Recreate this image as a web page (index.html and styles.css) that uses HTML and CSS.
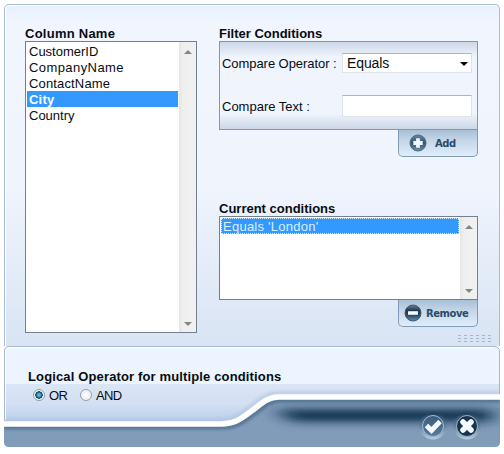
FILE: index.html
```html
<!DOCTYPE html>
<html lang="en">
<head>
<meta charset="utf-8">
<title>Filter</title>
<link rel="stylesheet" href="styles.css">
</head>
<body>
<main class="dialog">
  <section class="panel">
    <div class="columns">
      <h2><span class="t-column">Column Name</span></h2>
      <div class="listbox tall">
        <ul>
          <li>CustomerID</li>
          <li class="company">CompanyName</li>
          <li class="contact">ContactName</li>
          <li class="selected bold">City</li>
          <li>Country</li>
        </ul>
        <div class="scrollbar"><i class="up"></i><i class="down"></i></div>
      </div>
    </div>
    <div class="conditions">
      <h2>Filter Conditions</h2>
      <div class="filter">
        <div class="row"><label class="l-op">Compare Operator :</label><div class="select"><span>Equals</span><i></i></div></div>
        <div class="row second"><label>Compare Text :</label><div class="input"></div></div>
      </div>
      <div class="tab add">
        <svg width="18" height="18" viewBox="0 0 18 18"><defs><linearGradient id="ball" x2="0" y2="1"><stop stop-color="#68839e"/><stop offset=".5" stop-color="#34536f"/><stop offset="1" stop-color="#6e90ac"/></linearGradient></defs><circle cx="9" cy="9" r="8" fill="url(#ball)" stroke="#4f6b85"/><path d="M9 4.300v9.400M4.300 9h9.400" stroke="#edf6ff" stroke-width="3.800"/></svg>
        <span>Add</span>
      </div>
      <h2 class="current">Current conditions</h2>
      <div class="listbox short">
        <ul><li class="selected focus"><span>Equals 'London'</span></li></ul>
        <div class="scrollbar"><i class="up"></i><i class="down"></i></div>
      </div>
      <div class="tab remove">
        <svg width="18" height="18" viewBox="0 0 18 18"><defs><linearGradient id="ball2" x2="0" y2="1"><stop stop-color="#6b8298"/><stop offset=".35" stop-color="#20364d"/><stop offset=".6" stop-color="#27425b"/><stop offset="1" stop-color="#5f91b3"/></linearGradient></defs><circle cx="9" cy="9" r="8" fill="url(#ball2)" stroke="#3f5b74"/><path d="M4 9h10" stroke="#f4faff" stroke-width="3.600"/></svg>
        <span>Remove</span>
      </div>
    </div>
    <div class="grip"></div>
  </section>
  <section class="footer">
    <svg class="wave" width="496" height="101" viewBox="4 346 496 101">
      <defs>
        <linearGradient id="band" gradientUnits="userSpaceOnUse" x1="0" y1="384" x2="0" y2="421"><stop stop-color="#dae5f5"/><stop offset=".55" stop-color="#d3dff2"/><stop offset="1" stop-color="#bccfec"/></linearGradient>
        <filter id="soft" filterUnits="userSpaceOnUse" x="200" y="370" width="320" height="90"><feGaussianBlur stdDeviation="10 5"/></filter>
        <filter id="edge" x="-10%" y="-100%" width="120%" height="300%"><feGaussianBlur stdDeviation="1.500"/></filter>
        <clipPath id="frame"><path d="M9 346H494Q500 346 500 352V442Q500 447 495 447H9Q4 447 4 442V351Q4 346 9 346Z"/></clipPath>
        <clipPath id="bar"><path d="M4 425H222C236 425 243 418 253 411C262 404 268 398 279 398H500V447H4Z"/></clipPath>
      </defs>
      <g clip-path="url(#frame)">
        <rect x="4" y="346" width="496" height="101" fill="#ecf4ff"/>
        <rect x="4" y="384" width="496" height="42" fill="url(#band)"/>
        <path d="M4 420H222C234 420 241 413 251 406C260 399 266 393 279 393H500" fill="none" stroke="#aac0dd" stroke-width="4" opacity=".55" filter="url(#edge)"/>
        <g clip-path="url(#bar)">
          <rect x="4" y="390" width="496" height="57" fill="#809cb9"/>
          <path d="M4 427H222C238 427 245 420 255 413C264 406 270 400 281 400H500" fill="none" stroke="#557694" stroke-width="5" filter="url(#edge)"/>
          <path d="M277 410H492V421H300Q285 421 277 410Z" fill="#052440" filter="url(#soft)"/>
        </g>
        <path d="M4 424H222C236 424 243 417 253 410C262 403 268 397 279 397H500" fill="none" stroke="#fff" stroke-width="5.500"/>
      </g>
      <path d="M4.500 421V351Q4.500 346.500 9 346.500H494Q499.500 346.500 499.500 352V394" fill="none" stroke="#a9bacb"/>
      <path d="M5.500 420V352Q5.500 347.500 10 347.500H493" fill="none" stroke="#fff" opacity=".8"/>
    </svg>
    <div class="operator">
      <h2>Logical Operator for multiple conditions</h2>
      <div class="choices">
        <span class="radio on"></span><span class="or">OR</span>
        <span class="radio"></span><span class="and">AND</span>
      </div>
    </div>
    <div class="actions">
      <svg width="28" height="28" viewBox="0 0 28 28"><defs><linearGradient id="rim" x2="0" y2="1"><stop stop-color="#1e3b56"/><stop offset=".45" stop-color="#587895"/><stop offset="1" stop-color="#b8cde0"/></linearGradient><linearGradient id="face" x2="0" y2="1"><stop stop-color="#3b5b79"/><stop offset="1" stop-color="#587c9e"/></linearGradient></defs><circle cx="14" cy="14" r="13.500" fill="url(#rim)"/><circle cx="14" cy="14" r="10.500" fill="url(#face)" stroke="#a3bbcf"/><path d="M7.500 13.500L12.500 18.500L21 9.500" fill="none" stroke="#f4faff" stroke-width="4.800"/></svg>
      <svg width="28" height="28" viewBox="0 0 28 28"><circle cx="14" cy="14" r="13.500" fill="url(#rim)"/><circle cx="14" cy="14" r="10.500" fill="#19334c" stroke="#9ab3c9"/><path d="M10 10L18 18M18 10L10 18" stroke="#f4faff" stroke-width="5.500" stroke-linecap="round"/></svg>
    </div>
  </section>
</main>
</body>
</html>
```
FILE: styles.css
```css
* { box-sizing: border-box; }
body { margin: 0; background: #fff; color: #080c12; font: 13px/16px "Liberation Sans", Arial, sans-serif; }
h2 { margin: 0; font-size: 13px; line-height: 16px; height: 15px; font-weight: bold; white-space: nowrap; }
.dialog { width: 496px; margin: 4px 0 0 4px; }
.panel { position: relative; display: flex; height: 342px; padding: 21px 0 0 20px; border: 1px solid #a9bed6; border-bottom: 0; border-radius: 5px 5px 0 0; background: linear-gradient(#e9f2ff 0, #f0f5fe 18px, #eff4fd 55%, #d8e4f4 100%); box-shadow: inset 1px 1px #fff; }
.columns { width: 172px; margin-right: 22px; }
.conditions { width: 259px; }
.t-column { letter-spacing: .25px; }
.listbox { display: flex; padding: 1px; border: 1px solid #73808d; background: #fff; }
.tall { height: 292px; }
.short { height: 84px; }
.listbox ul { flex: 1; margin: 0; padding: 0; list-style: none; }
.listbox li { height: 16px; line-height: 18px; padding-left: 2px; white-space: nowrap; }
.listbox .company { letter-spacing: .42px; }
.listbox .contact { letter-spacing: .15px; }
.listbox .selected { color: #fff; background: #3399ff; }
.listbox .bold { font-weight: bold; letter-spacing: .2px; }
.listbox .focus { outline: 1px dotted #d4eaff; outline-offset: -1px; letter-spacing: .25px; color: #dcefff; }
.scrollbar { width: 17px; display: flex; flex-direction: column; justify-content: space-between; align-items: center; padding: 8px 0 6px; margin: -1px -1px -1px 1px; background: linear-gradient(90deg, #e5e5e5, #efefef 4px, #f1f1f1); }
.scrollbar i { border: 4px solid transparent; border-top: 0; border-bottom: 4px solid #858585; }
.scrollbar .down { border-bottom: 0; border-top: 4px solid #858585; }
.filter { height: 89px; padding: 11px 5px 0 2px; border: 1px solid #8198b2; background: linear-gradient(#ccd8e8, #eff4fd 15px, #eff4fd 72px, #ccd6e6); }
.row { display: flex; justify-content: space-between; align-items: center; height: 20px; white-space: nowrap; }
.row label { padding-top: 2px; }
.second { margin-top: 22px; height: 22px; }
.l-op { letter-spacing: -.06px; }
.select, .input { width: 130px; height: 20px; border: 1px solid #dce3ea; border-top-color: #aab4c2; background: #fff; }
.input { height: 22px; }
.select { display: flex; justify-content: space-between; align-items: center; padding: 0 3px 0 4px; font-size: 14px; letter-spacing: -.1px; }
.select i { border: 4px solid transparent; border-top-color: #000; border-bottom: 0; margin-top: 1px; }
.tab { display: flex; align-items: center; width: 80px; height: 27px; margin-left: auto; border: 1px solid #7f9bb8; border-top: 0; border-radius: 0 0 5px 5px; background: linear-gradient(#a8bfd5, #c4d6e8 40%, #e0edfa); color: #2b4b69; font: bold 10px/14px "DejaVu Sans", Verdana, sans-serif; }
.add svg { margin: 0 8px 0 10px; }
.remove svg { margin: 0 4px 0 5px; }
.tab span { letter-spacing: -.45px; padding-top: 2px; }
.current { margin-top: 44px; }
.grip { position: absolute; right: 7px; bottom: 3px; width: 34px; height: 8px; background: repeating-linear-gradient(90deg, transparent 0 3px, #d9e4f3 3px 6px), repeating-linear-gradient(#a5b6ce 0 1px, transparent 1px 3px); }
.footer { position: relative; height: 101px; display: flex; justify-content: space-between; }
.footer h2 { letter-spacing: .14px; height: 16px; }
.wave { position: absolute; left: 0; top: 0; }
.operator, .actions { position: relative; }
.operator { padding: 23px 0 0 24px; }
.choices { display: flex; align-items: center; height: 16px; padding-left: 5px; margin-top: 2px; }
.radio { width: 12px; height: 12px; border: 1px solid #929eaa; border-radius: 50%; background: radial-gradient(#fff, #dce1e7); box-shadow: inset 0 0 0 1px #f7f9fb; }
.radio.on { background: radial-gradient(circle at 50% 50%, #5bb7df 0 1px, #12577c 3px, #143d58 3.5px, #e7edf3 4px); }
.or { width: 31px; margin-left: 4px; padding-top: 2px; letter-spacing: -.5px; }
.and { margin-left: 4px; padding-top: 2px; letter-spacing: -.6px; }
.actions { display: flex; gap: 6px; padding: 66px 19px 0 0; }
```
